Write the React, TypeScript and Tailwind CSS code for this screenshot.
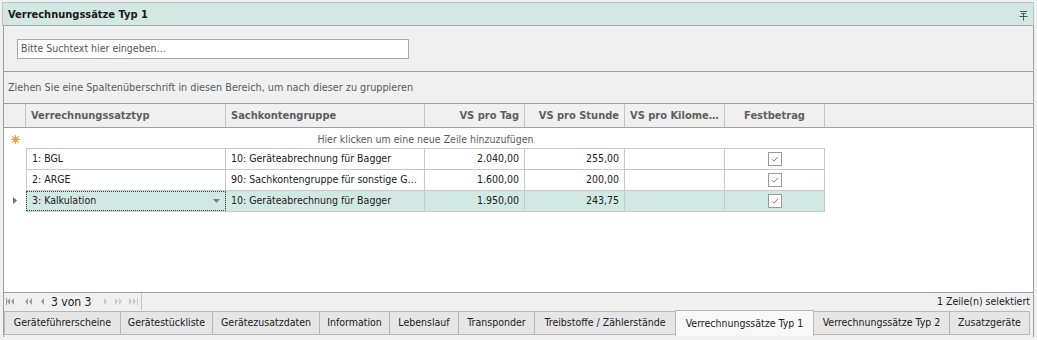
import React from "react";

const cols = [
  { label: "Verrechnungssatztyp", w: "w-[200px]", align: "text-left" },
  { label: "Sachkontengruppe", w: "w-[199px]", align: "text-left" },
  { label: "VS pro Tag", w: "w-[100px]", align: "text-right" },
  { label: "VS pro Stunde", w: "w-[100px]", align: "text-right" },
  { label: "VS pro Kilome…", w: "w-[100px]", align: "text-left" },
  { label: "Festbetrag", w: "w-[100px]", align: "text-center" },
];

const rows = [
  { typ: "1: BGL", gruppe: "10: Geräteabrechnung für Bagger", tag: "2.040,00", std: "255,00" },
  { typ: "2: ARGE", gruppe: "90: Sachkontengruppe für sonstige G…", tag: "1.600,00", std: "200,00" },
  { typ: "3: Kalkulation", gruppe: "10: Geräteabrechnung für Bagger", tag: "1.950,00", std: "243,75", selected: true },
];

const tabs = [
  { label: "Geräteführerscheine", w: "w-[117px]" },
  { label: "Gerätestückliste", w: "w-[93px]" },
  { label: "Gerätezusatzdaten", w: "w-[108px]" },
  { label: "Information", w: "w-[71px]" },
  { label: "Lebenslauf", w: "w-[70px]" },
  { label: "Transponder", w: "w-[77px]" },
  { label: "Treibstoffe / Zählerstände", w: "w-[142px]" },
  { label: "Verrechnungssätze Typ 1", w: "w-[139px]", active: true },
  { label: "Verrechnungssätze Typ 2", w: "w-[137px]" },
  { label: "Zusatzgeräte", w: "w-[81px]" },
];

function Check() {
  return (
    <span className="flex h-[14px] w-[14px] items-center justify-center border border-[#9a9a9a] bg-white">
      <svg width="10" height="10" viewBox="0 0 10 10" fill="none">
        <path d="M2 5.2l2 2L8 2.8" stroke="#808080" strokeWidth="1" />
      </svg>
    </span>
  );
}

function NavIcon({ kind }: { kind: string }) {
  const c = "#9a9a9a";
  return (
    <svg width="9" height="7" viewBox="0 0 9 7" fill={c} className="flex-none">
      {kind === "first" && (
        <>
          <rect x="0" y="0" width="1" height="7" />
          <path d="M4 0v7L1 3.5z" />
          <path d="M8 0v7L5 3.5z" />
        </>
      )}
      {kind === "prevPage" && (
        <>
          <path d="M4 0v7L1 3.5z" />
          <path d="M8 0v7L5 3.5z" />
        </>
      )}
      {kind === "prev" && <path d="M6 0v7L3 3.5z" />}
      {kind === "next" && <path d="M3 0v7L6 3.5z" fill="#c8c8c8" />}
      {kind === "nextPage" && (
        <g fill="#c8c8c8">
          <path d="M1 0v7L4 3.5z" />
          <path d="M5 0v7L8 3.5z" />
        </g>
      )}
      {kind === "last" && (
        <g fill="#c8c8c8">
          <path d="M0 0v7L3 3.5z" />
          <path d="M4 0v7L7 3.5z" />
          <rect x="8" y="0" width="1" height="7" />
        </g>
      )}
    </svg>
  );
}

export default function App() {
  return (
    <div className="h-[340px] w-[1037px] bg-[#f0f0f0] px-[2px] pt-[2px] font-['DejaVu_Sans_Condensed','DejaVu_Sans',sans-serif] text-[10.5px] text-[#202020]">
      {/* title */}
      <div className="flex h-[24px] w-[1032px] items-center justify-between border border-[#c4c4c4] border-b-[#a8a8a8] bg-[#d2e8e2] pl-[5px] pt-[3px]">
        <span className="text-[11px] font-bold text-[#1a1a1a]">Verrechnungssätze Typ 1</span>
        <svg width="9" height="10" viewBox="0 0 9 10" className="mr-[5px]" fill="none" stroke="#555">
          <path d="M1 0.5h7M2 2.5h5M4.5 2.5v3M0.5 5.5h8M4.5 5.5v4" />
        </svg>
      </div>

      <div className="ml-[1px] flex h-[311px] w-[1031px] flex-col border-x border-[#a0a0a0]">
        {/* search */}
        <div className="flex h-[46px] flex-none items-center border-b border-[#a0a0a0] px-[13px]">
          <div className="flex h-[20px] w-[392px] items-center border border-[#a8a8a8] bg-white px-[3px] text-[#555]">
            Bitte Suchtext hier eingeben…
          </div>
        </div>

        {/* group panel */}
        <div className="flex h-[32px] flex-none items-center border-b border-[#a0a0a0] px-[4px] pt-[1px] text-[10.75px] text-[#5a5a5a]">
          Ziehen Sie eine Spaltenüberschrift in diesen Bereich, um nach dieser zu gruppieren
        </div>

        {/* grid */}
        <div className="flex flex-1 flex-col bg-white">
          <div className="flex h-[24px] flex-none border-b border-[#a0a0a0] bg-[#f0f0f0] text-[11px] font-bold text-[#5f5f5f]">
            <div className="w-[22px] border-r border-[#c4c4c4]" />
            {cols.map((c) => (
              <div key={c.label} className={`${c.w} ${c.align} flex-none truncate border-r border-[#c4c4c4] px-[5px] leading-[23px]`}>
                {c.label}
              </div>
            ))}
          </div>

          <div className="flex h-[20px] items-center pt-[3px]">
            <div className="flex w-[22px] justify-center">
              <svg width="11" height="11" viewBox="0 0 11 11">
                <g stroke="#f5a040" strokeWidth="1.2">
                  <path d="M5.5 1v9M1 5.5h9M2.3 2.3l6.4 6.4M8.7 2.3l-6.4 6.4" />
                </g>
                <circle cx="5.5" cy="5.5" r="2.3" fill="#f29a3a" />
              </svg>
            </div>
            <div className="w-[799px] text-center text-[#5a5a5a]">Hier klicken um eine neue Zeile hinzuzufügen</div>
          </div>

          {rows.map((r) => (
            <div key={r.typ} className="flex h-[21px]">
              <div className="flex w-[22px] items-center justify-center">
                {r.selected && (
                  <svg width="4" height="7" viewBox="0 0 4 7" fill="#707070">
                    <path d="M0 0l4 3.5L0 7z" />
                  </svg>
                )}
              </div>
              <div className={`flex border-t border-[#c8c8c8] ${r.selected ? "h-[22px] border-b bg-[#d2e8e2]" : "bg-white"}`}>
                <div className={`relative flex w-[200px] items-center border-x border-[#c8c8c8] px-[5px] ${r.selected ? "outline-1 -outline-offset-1 outline-dotted outline-[#404040]" : ""}`}>
                  {r.typ}
                  {r.selected && (
                    <svg width="7" height="4" viewBox="0 0 7 4" className="absolute right-[5px] top-[8px]" fill="#808080">
                      <path d="M0 0h7L3.5 4z" />
                    </svg>
                  )}
                </div>
                <div className="flex w-[199px] items-center truncate whitespace-nowrap border-r border-[#c8c8c8] px-[5px]">{r.gruppe}</div>
                <div className="flex w-[100px] items-center justify-end border-r border-[#c8c8c8] px-[5px]">{r.tag}</div>
                <div className="flex w-[100px] items-center justify-end border-r border-[#c8c8c8] px-[5px]">{r.std}</div>
                <div className="w-[100px] border-r border-[#c8c8c8]" />
                <div className="flex w-[100px] items-center justify-center border-r border-[#c8c8c8]">
                  <Check />
                </div>
              </div>
            </div>
          ))}
        </div>

        {/* navigator */}
        <div className="flex h-[18px] flex-none items-center justify-between border-t border-[#a0a0a0] bg-[#f0f0f0] pr-[3px]">
          <div className="flex h-full w-[138px] items-center border-r border-[#c4c4c4] pl-[2px]">
            <NavIcon kind="first" />
            <span className="w-[9px]" />
            <NavIcon kind="prevPage" />
            <span className="w-[5px]" />
            <NavIcon kind="prev" />
            <span className="w-[54px] whitespace-nowrap pl-[4px] text-[12px] text-[#202020]">3 von 3</span>
            <NavIcon kind="next" />
            <span className="w-[4px]" />
            <NavIcon kind="nextPage" />
            <span className="w-[6px]" />
            <NavIcon kind="last" />
          </div>
          <span className="whitespace-nowrap">1 Zeile(n) selektiert</span>
        </div>

        {/* tabs */}
        <div className="flex h-[27px] flex-none items-start bg-[#f0f0f0] pt-[1px]">
          {tabs.map((t) => (
            <div
              key={t.label}
              className={`${t.w} flex flex-none items-center justify-center whitespace-nowrap border border-[#b8b8b8] text-[#202020] ${
                t.active ? "-mt-px h-[26px] border-b-0 bg-[#f8f8f8]" : "h-[24px] bg-[#e6e6e6]"
              } -ml-px first:ml-0`}
            >
              {t.label}
            </div>
          ))}
        </div>
      </div>
    </div>
  );
}
